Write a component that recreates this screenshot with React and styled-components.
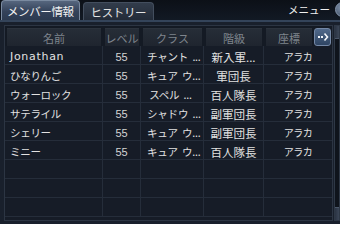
import React from "react";
import styled, { createGlobalStyle } from "styled-components";

const Global = createGlobalStyle`
  html, body { margin: 0; padding: 0; background: #ffffff; }
  * { box-sizing: border-box; }
`;

const Frame = styled.div`
  width: 340px;
  height: 224px;
  background: #141a24;
  display: flex;
  flex-direction: column;
  overflow: hidden;
  font-family: "Noto Sans CJK JP", "Noto Sans", sans-serif;
`;

const TopBar = styled.div`
  height: 22px;
  flex: none;
  display: flex;
  align-items: flex-end;
  gap: 3px;
  padding-left: 1px;
  background: linear-gradient(#0c1017, #121924);
  border-bottom: 2px solid #34445a;
  position: relative;
`;

const Tab = styled.div`
  height: ${(p) => (p.$active ? "20px" : "18px")};
  padding: 0 ${(p) => (p.$active ? "5px" : "7px")};
  display: flex;
  align-items: center;
  font-size: 11.5px;
  color: ${(p) => (p.$active ? "#f2f2f2" : "#e4e4e4")};
  letter-spacing: -0.4px;
  border: 1px solid ${(p) => (p.$active ? "#7a8aa0" : "#434e5e")};
  border-bottom: none;
  border-radius: 4px 4px 0 0;
  background: ${(p) =>
    p.$active
      ? "linear-gradient(#56667e, #34425a 55%, #2c3a50)"
      : "linear-gradient(#323c4b, #232b38)"};
`;

const MenuLabel = styled.div`
  margin-left: auto;
  align-self: center;
  margin-top: -2px;
  font-size: 10.5px;
  color: #f0f0f0;
  padding-right: 10px;
`;

const MenuKnob = styled.div`
  position: absolute;
  right: -10px;
  top: 2px;
  width: 15px;
  height: 15px;
  border-radius: 50%;
  background: radial-gradient(circle at 40% 35%, #7d8fa8, #3b4a60);
  border: 1px solid #8898ae;
`;

const Panel = styled.div`
  flex: 1;
  display: flex;
  gap: 1px;
  padding: 3px 0 3px 4px;
  background: #19202c;
`;

const Table = styled.div`
  width: 329px;
  border: 1px solid #2c3543;
  background: #161c27;
  display: flex;
  flex-direction: column;
`;

const HeaderRow = styled.div`
  height: 20px;
  flex: none;
  display: grid;
  grid-template-columns: 98px 38px 63px 60px 50px 18px;
  background: #141a24;
`;

const HeadCell = styled.div`
  margin: 2px 2px 0 2px;
  background: linear-gradient(#262d37, #1f252f);
  border-top: 1px solid #2c333d;
  display: flex;
  align-items: center;
  justify-content: center;
  font-size: 11px;
  color: #7f858d;
`;

const ExpandButton = styled.div`
  margin: 2px 1px 0 0;
  border-radius: 3px;
  background: linear-gradient(#51698a, #2f4563);
  border: 1px solid #7488a6;
  display: flex;
  align-items: center;
  justify-content: center;
`;

const Body = styled.div`
  display: flex;
  flex-direction: column;
`;

const Row = styled.div`
  height: 19px;
  display: grid;
  grid-template-columns: 98px 38px 63px 60px 68px;
  border-bottom: 1px solid #252d3a;
`;

const Cell = styled.div`
  display: flex;
  align-items: center;
  padding-top: 3px;
  justify-content: ${(p) => (p.$align === "left" ? "flex-start" : "center")};
  padding-left: ${(p) => (p.$align === "left" ? p.$pad || "5px" : "0")};
  border-right: ${(p) => (p.$last ? "none" : "1px solid #252d3a")};
  white-space: pre;
  overflow: hidden;
  color: ${(p) => (p.$num ? "#d4d4d4" : "#e2e2e2")};
  font-size: ${(p) => p.$size || "10.5px"};
  letter-spacing: ${(p) => p.$ls || "0"};
  font-family: ${(p) =>
    p.$latin
      ? '"DejaVu Sans", "Noto Sans CJK JP", sans-serif'
      : p.$num
      ? '"Liberation Sans", "Noto Sans CJK JP", sans-serif'
      : '"Noto Sans CJK JP", "Noto Sans", sans-serif'};
`;

const ScrollTrack = styled.div`
  width: 7px;
  border: 1px solid #2e3846;
  background: #0f141c;
  display: flex;
  flex-direction: column;
  justify-content: space-between;
`;

const ScrollArrow = styled.div`
  height: 13px;
  background: linear-gradient(90deg, #2a3342, #3b4657);
  border-bottom: ${(p) => (p.$bottom ? "none" : "1px solid #4a5668")};
  border-top: ${(p) => (p.$bottom ? "1px solid #4a5668" : "none")};
`;

const members = [
  { name: "Jonathan", latin: true, level: "55", cls: "チャント  ...", rank: "新入軍...", pos: "アラカ" },
  { name: "ひなりんご", level: "55", cls: "キュア  ウ...", rank: "軍団長", pos: "アラカ" },
  { name: "ウォーロック", level: "55", cls: " スペル  ...", rank: "百人隊長", pos: "アラカ" },
  { name: "サテライル", level: "55", cls: "シャドウ  ...", rank: "副軍団長", pos: "アラカ" },
  { name: "シェリー", level: "55", cls: "キュア  ウ...", rank: "副軍団長", pos: "アラカ" },
  { name: "ミニー", level: "55", cls: "キュア  ウ...", rank: "百人隊長", pos: "アラカ" },
];

const EMPTY_ROWS = 3;

export default function App() {
  return (
    <>
      <Global />
      <Frame>
        <TopBar>
          <Tab $active>メンバー情報</Tab>
          <Tab>ヒストリー</Tab>
          <MenuLabel>メニュー</MenuLabel>
          <MenuKnob />
        </TopBar>
        <Panel>
          <Table>
            <HeaderRow>
              <HeadCell>名前</HeadCell>
              <HeadCell>レベル</HeadCell>
              <HeadCell>クラス</HeadCell>
              <HeadCell>階級</HeadCell>
              <HeadCell>座標</HeadCell>
              <ExpandButton>
                <svg width="12" height="10" viewBox="0 0 12 10">
                  <rect x="1" y="4" width="2" height="2" fill="#f4f6fa" />
                  <rect x="4" y="4" width="2" height="2" fill="#f4f6fa" />
                  <path d="M7.5 1.5 L10.5 5 L7.5 8.5" stroke="#f4f6fa" strokeWidth="1.6" fill="none" />
                </svg>
              </ExpandButton>
            </HeaderRow>
            <Body>
              {members.map((m) => (
                <Row key={m.name}>
                  <Cell
                    $align="left"
                    $latin={m.latin}
                    $size={m.latin ? "11px" : "10.5px"}
                    $ls={m.latin ? "0.7px" : "-0.3px"}
                  >
                    {m.name}
                  </Cell>
                  <Cell $num $size="11px">{m.level}</Cell>
                  <Cell $align="left" $pad="6px" $size="10.5px" $ls="-0.2px">{m.cls}</Cell>
                  <Cell $size="11.5px">{m.rank}</Cell>
                  <Cell $last $size="10px" $ls="-0.5px">{m.pos}</Cell>
                </Row>
              ))}
              {Array.from({ length: EMPTY_ROWS }).map((_, i) => (
                <Row key={"e" + i}>
                  <Cell />
                  <Cell />
                  <Cell />
                  <Cell />
                  <Cell $last />
                </Row>
              ))}
            </Body>
          </Table>
          <ScrollTrack>
            <ScrollArrow />
            <ScrollArrow $bottom />
          </ScrollTrack>
        </Panel>
      </Frame>
    </>
  );
}
